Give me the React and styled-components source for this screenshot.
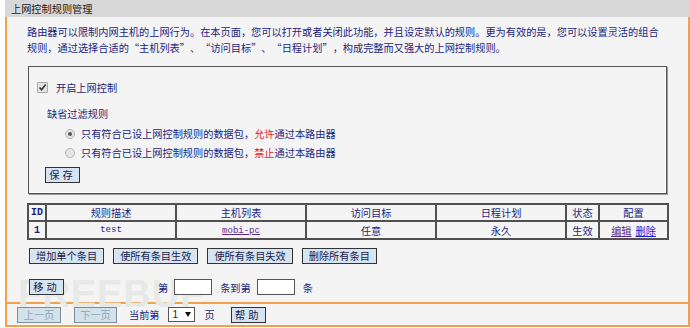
import styled, { createGlobalStyle } from "styled-components";

const GlobalStyle = createGlobalStyle`
  html, body { margin: 0; padding: 0; background: #fff; }
  body { font-family: "Noto Sans CJK SC", "Noto Sans", sans-serif; }
  * { box-sizing: border-box; }
`;

const navy = "#1c1f7e";
const orange = "#f2a04a";

const Page = styled.div`
  position: relative;
  width: 690px;
  height: 328px;
  overflow: hidden;
  font-size: 10.2px;
  color: ${navy};
`;

const Title = styled.div`
  margin-left: 5px;
  height: 17px;
  line-height: 17px;
  padding-left: 6px;
  background: #d7d7d7;
  color: #222;
`;

const Panel = styled.div`
  margin-left: 5px;
  width: 685px;
  background: #f4f4f4;
  border-left: 2px solid ${orange};
  border-right: 2px solid ${orange};
  border-bottom: 2px solid ${orange};
`;

const Main = styled.div`
  position: relative;
  padding: 7px 21px 7px 20px;
  border-bottom: 2px solid ${orange};
`;

const Intro = styled.p`
  margin: 0;
  line-height: 16px;
`;

const Quote = styled.span`
  display: inline-block;
  width: 10.2px;
  text-align: ${(p) => (p.$close ? "left" : "right")};
`;

const Fieldset = styled.div`
  margin: 10px 0 0 1px;
  height: 128px;
  border: 1px solid #555;
  box-shadow: inset -1px -1px 0 #fff, 1px 1px 0 #9a9a9a;
  padding: 12px 0 0 8px;
`;

const Row = styled.div`
  display: flex;
  align-items: center;
  height: ${(p) => p.$h || 16}px;
  margin-top: ${(p) => p.$mt || 0}px;
  padding-left: ${(p) => p.$indent || 0}px;
  gap: ${(p) => p.$gap || 0}px;
`;

const CheckBox = styled.span`
  display: inline-flex;
  align-items: center;
  justify-content: center;
  width: 11px;
  height: 11px;
  border: 1px solid #a8a8a8;
  background: #e4e4e4;
  border-radius: 1px;
`;

const Radio = styled.span`
  display: inline-flex;
  align-items: center;
  justify-content: center;
  width: 10px;
  height: 10px;
  border-radius: 50%;
  border: 1px solid #b4b4b4;
  background: #e6e6e6;
  &::after {
    content: "";
    width: 4px;
    height: 4px;
    border-radius: 50%;
    background: ${(p) => (p.$on ? "#555" : "transparent")};
  }
`;

const Red = styled.span`
  color: #e41b1b;
`;

const Button = styled.button`
  position: relative;
  z-index: 1;
  font-family: inherit;
  font-size: 10.2px;
  height: 16px;
  line-height: 14px;
  padding: 0 ${(p) => p.$pad ?? 6}px;
  width: ${(p) => (p.$w ? `${p.$w}px` : "auto")};
  margin: 0;
  background: ${(p) => (p.disabled ? "#d3e2ea" : "#d6e3f1")};
  color: ${(p) => (p.disabled ? "#8fa5b8" : "#1a1c4a")};
  border: 1px solid ${(p) => (p.disabled ? "#7d8c96" : "#333")};
  border-radius: 0;
  letter-spacing: ${(p) => p.$ls || 0}px;
  cursor: pointer;
`;

const Table = styled.table`
  margin-top: 9px;
  width: 640px;
  table-layout: fixed;
  border-spacing: 0;
  border: 1px solid #505050;
  color: ${navy};
  tr {
    height: 17px;
  }
  td {
    border: 1px solid #505050;
    height: 15px;
    padding: 0;
    line-height: 13px;
    text-align: center;
    vertical-align: middle;
    overflow: hidden;
    white-space: nowrap;
  }
  td > * {
    vertical-align: top;
  }
`;

const Mono = styled.span`
  font-family: "Liberation Mono", "DejaVu Sans Mono", monospace;
  font-size: ${(p) => p.$size || 9}px;
  font-weight: ${(p) => (p.$bold ? 700 : 400)};
  line-height: 13px;
`;

const Link = styled.a`
  color: ${(p) => p.$color || "#5b2b8c"};
  text-decoration: underline;
  margin: 0 2px;
  line-height: 13px;
`;

const Actions = styled.div`
  display: flex;
  gap: 9px;
  margin-top: 8px;
  padding-left: 2px;
`;

const MoveRow = styled.div`
  position: relative;
  z-index: 1;
  display: flex;
  align-items: center;
  height: 16px;
  margin-top: 15px;
  padding-left: 2px;
`;

const Field = styled.span`
  display: inline-block;
  width: 38px;
  height: 16px;
  background: #fff;
  border: 1px solid #555;
  margin: 0 8px 0 6px;
`;

const Watermark = styled.div`
  position: absolute;
  z-index: 0;
  left: 11px;
  bottom: -12px;
  font-family: "Liberation Sans", Arial, sans-serif;
  font-weight: 700;
  font-size: 38px;
  line-height: 40px;
  letter-spacing: 1px;
  color: #e6e9e6;
  pointer-events: none;
`;

const Bottom = styled.div`
  display: flex;
  align-items: center;
  height: 21px;
  padding-left: 10px;
`;

const Select = styled.span`
  display: inline-flex;
  align-items: center;
  justify-content: space-between;
  width: 27px;
  height: 15px;
  background: #fff;
  border: 1px solid #555;
  padding: 0 3px 0 4px;
  margin: 0 10px 0 8px;
  color: #222;
  font-family: "Liberation Sans", Arial, sans-serif;
  font-size: 10px;
`;

const Arrow = styled.span`
  width: 0;
  height: 0;
  border-left: 3px solid transparent;
  border-right: 3px solid transparent;
  border-top: 5px solid #111;
`;

const Check = () => (
  <svg width="9" height="9" viewBox="0 0 9 9">
    <path d="M1.5 4.5 L3.6 6.8 L7.6 1.6" fill="none" stroke="#333" strokeWidth="1.6" />
  </svg>
);

const rows = [
  { id: "1", desc: "test", host: "mobi-pc", target: "任意", plan: "永久", state: "生效" },
];

export default function App() {
  return (
    <Page>
      <GlobalStyle />
      <Title>上网控制规则管理</Title>
      <Panel>
        <Main>
          <Intro lang="zh-CN">
            路由器可以限制内网主机的上网行为。在本页面，您可以打开或者关闭此功能，并且设定默认的规则。更为有效的是，您可以设置灵活的组合
            <br />
            规则，通过选择合适的<Quote>“</Quote>主机列表<Quote $close>”</Quote>、<Quote>“</Quote>访问目标
            <Quote $close>”</Quote>、<Quote>“</Quote>日程计划<Quote $close>”</Quote>，构成完整而又强大的上网控制规则。
          </Intro>
          <Fieldset>
            <Row $gap={8}>
              <CheckBox>
                <Check />
              </CheckBox>
              <span>开启上网控制</span>
            </Row>
            <Row $mt={10} $indent={10}>
              缺省过滤规则
            </Row>
            <Row $mt={3} $h={19} $indent={28} $gap={6}>
              <Radio $on />
              <span>
                只有符合已设上网控制规则的数据包，<Red>允许</Red>通过本路由器
              </span>
            </Row>
            <Row $h={19} $indent={28} $gap={6}>
              <Radio />
              <span>
                只有符合已设上网控制规则的数据包，<Red>禁止</Red>通过本路由器
              </span>
            </Row>
            <Row $mt={5} $indent={8}>
              <Button $w={35} $pad={0} $ls={3}>
                保存
              </Button>
            </Row>
          </Fieldset>
          <Table>
            <colgroup>
              <col style={{ width: 18 }} />
              <col style={{ width: 130 }} />
              <col style={{ width: 130 }} />
              <col style={{ width: 130 }} />
              <col style={{ width: 130 }} />
              <col style={{ width: 33 }} />
              <col style={{ width: 69 }} />
            </colgroup>
            <tbody>
              <tr>
                <td>
                  <Mono $bold $size={10}>ID</Mono>
                </td>
                <td>规则描述</td>
                <td>主机列表</td>
                <td>访问目标</td>
                <td>日程计划</td>
                <td>状态</td>
                <td>配置</td>
              </tr>
              {rows.map((r) => (
                <tr key={r.id}>
                  <td>
                    <Mono $bold $size={10}>{r.id}</Mono>
                  </td>
                  <td>
                    <Mono>{r.desc}</Mono>
                  </td>
                  <td>
                    <Link href="#">
                      <Mono>{r.host}</Mono>
                    </Link>
                  </td>
                  <td>{r.target}</td>
                  <td>{r.plan}</td>
                  <td>{r.state}</td>
                  <td>
                    <Link href="#">编辑</Link>
                    <Link href="#" $color="#1b1bdc">
                      删除
                    </Link>
                  </td>
                </tr>
              ))}
            </tbody>
          </Table>
          <Actions>
            <Button>增加单个条目</Button>
            <Button>使所有条目生效</Button>
            <Button>使所有条目失效</Button>
            <Button>删除所有条目</Button>
          </Actions>
          <Watermark>FREEBUF</Watermark>
          <MoveRow>
            <Button $w={35} $pad={0} $ls={3}>
              移动
            </Button>
            <span style={{ marginLeft: 94 }}>第</span>
            <Field />
            <span>条到第</span>
            <Field />
            <span>条</span>
          </MoveRow>
        </Main>
        <Bottom>
          <Button disabled $w={44} $pad={0}>
            上一页
          </Button>
          <Button disabled $w={43} $pad={0} style={{ marginLeft: 13 }}>
            下一页
          </Button>
          <span style={{ marginLeft: 12 }}>当前第</span>
          <Select>
            1<Arrow />
          </Select>
          <span>页</span>
          <Button $w={35} $pad={0} $ls={3} style={{ marginLeft: 16 }}>
            帮助
          </Button>
        </Bottom>
      </Panel>
    </Page>
  );
}
